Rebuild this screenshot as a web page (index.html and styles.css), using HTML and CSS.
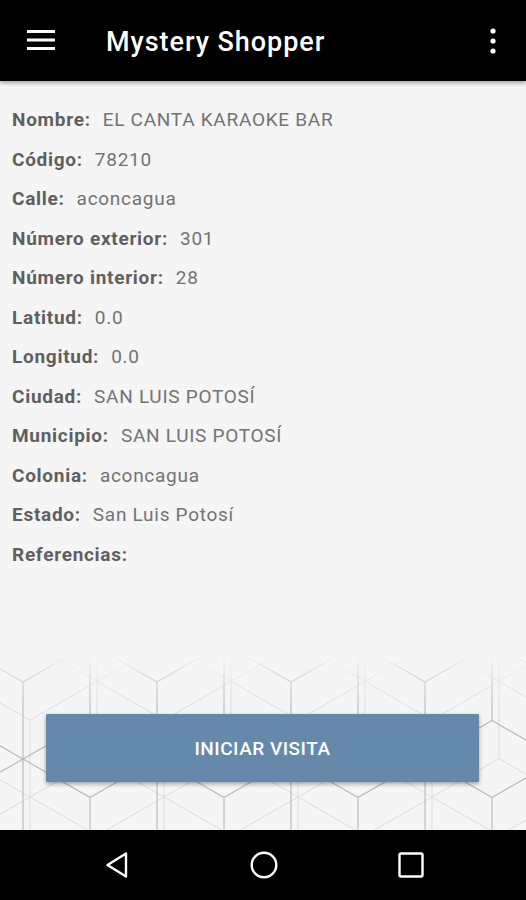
FILE: index.html
```html
<!DOCTYPE html>
<html lang="es">
<head>
<meta charset="utf-8">
<title>Mystery Shopper</title>
<link rel="stylesheet" href="styles.css">
</head>
<body>
<div class="screen">
  <header class="appbar">
    <svg class="menu-icon" width="28" height="22" viewBox="0 0 28 22">
      <rect x="0" y="1" width="28" height="3" fill="#fff"/>
      <rect x="0" y="9.5" width="28" height="3" fill="#fff"/>
      <rect x="0" y="18" width="28" height="3" fill="#fff"/>
    </svg>
    <h1 class="title">Mystery Shopper</h1>
    <svg class="more-icon" width="6" height="26" viewBox="0 0 6 26">
      <circle cx="3" cy="3" r="2.6" fill="#fff"/>
      <circle cx="3" cy="13" r="2.6" fill="#fff"/>
      <circle cx="3" cy="23" r="2.6" fill="#fff"/>
    </svg>
  </header>
  <main class="content">
    <ul class="info">
      <li class="row"><span class="label">Nombre:</span><span class="value">EL CANTA KARAOKE BAR</span></li>
      <li class="row"><span class="label">Código:</span><span class="value">78210</span></li>
      <li class="row"><span class="label">Calle:</span><span class="value">aconcagua</span></li>
      <li class="row"><span class="label">Número exterior:</span><span class="value">301</span></li>
      <li class="row"><span class="label">Número interior:</span><span class="value">28</span></li>
      <li class="row"><span class="label">Latitud:</span><span class="value">0.0</span></li>
      <li class="row"><span class="label">Longitud:</span><span class="value">0.0</span></li>
      <li class="row"><span class="label">Ciudad:</span><span class="value">SAN LUIS POTOSÍ</span></li>
      <li class="row"><span class="label">Municipio:</span><span class="value">SAN LUIS POTOSÍ</span></li>
      <li class="row"><span class="label">Colonia:</span><span class="value">aconcagua</span></li>
      <li class="row"><span class="label">Estado:</span><span class="value">San Luis Potosí</span></li>
      <li class="row"><span class="label">Referencias:</span><span class="value"></span></li>
    </ul>
    <div class="footer">
      <button class="start-btn" type="button">INICIAR VISITA</button>
    </div>
  </main>
  <nav class="navbar">
    <svg width="26" height="28" viewBox="0 0 26 28">
      <path d="M22 2.5 L3.5 14 L22 25.5 Z" fill="none" stroke="#fff" stroke-width="2.4" stroke-linejoin="round"/>
    </svg>
    <svg width="28" height="28" viewBox="0 0 28 28">
      <circle cx="14" cy="14" r="12.3" fill="none" stroke="#fff" stroke-width="2.4"/>
    </svg>
    <svg width="26" height="26" viewBox="0 0 26 26">
      <rect x="1.5" y="1.5" width="23" height="23" rx="1.5" fill="none" stroke="#fff" stroke-width="2.4"/>
    </svg>
  </nav>
</div>
</body>
</html>
```
FILE: styles.css
```css
* { box-sizing: border-box; }
html, body { margin: 0; padding: 0; }
body {
  width: 526px;
  height: 900px;
  overflow: hidden;
  font-family: Roboto, "Noto Sans", "Liberation Sans", sans-serif;
  background: #f5f5f5;
}
.screen {
  display: flex;
  flex-direction: column;
  height: 900px;
}
.appbar {
  height: 81px;
  flex: none;
  background: #000;
  display: flex;
  align-items: center;
  padding: 0 30px 0 27px;
  position: relative;
  z-index: 2;
  box-shadow: 0 2px 4px rgba(0,0,0,0.35);
}
.menu-icon { flex: none; margin-top: -1px; }
.title {
  margin: 0 0 0 51px;
  flex: 1;
  color: #fff;
  font-size: 27px;
  font-weight: 500;
  letter-spacing: 0.95px;
  margin-top: 2px;
}
.more-icon { flex: none; margin-top: 1px; }
.content {
  flex: 1;
  display: flex;
  flex-direction: column;
  justify-content: space-between;
}
.info {
  list-style: none;
  margin: 0;
  padding: 19px 12px 0;
}
.row {
  height: 39.5px;
  line-height: 39.5px;
  font-size: 19px;
  letter-spacing: 0.72px;
  white-space: nowrap;
}
.label {
  font-weight: 700;
  color: #5f5f5f;
}
.value {
  margin-left: 12px;
  color: #737373;
}
.footer {
  height: 175px;
  padding: 59px 47px 48px 46px;
  background-color: #f5f5f5;
  background-image:
    linear-gradient(to bottom, #f5f5f5 0%, rgba(245,245,245,0.5) 12%, rgba(245,245,245,0) 30%),
    url("data:image/svg+xml,%3Csvg xmlns='http://www.w3.org/2000/svg' width='134' height='231' viewBox='0 0 134 231'%3E%3Cg fill='none' stroke='%23b8b8b8' stroke-width='1.1'%3E%3Cpath d='M67 0L134 38.5L134 115.5L67 154L0 115.5L0 38.5Z'/%3E%3Cpath d='M67 77L67 231M67 77L0 38.5M67 77L134 38.5M0 0L0 38.5M134 0L134 38.5M0 192.5L0 231M134 192.5L134 231M0 192.5L67 154M134 192.5L67 154'/%3E%3C/g%3E%3C/svg%3E"),
    url("data:image/svg+xml,%3Csvg xmlns='http://www.w3.org/2000/svg' width='134' height='231' viewBox='0 0 134 231'%3E%3Cg fill='none' stroke='%23dcdcdc' stroke-width='1'%3E%3Cpath d='M67 0L134 38.5L134 115.5L67 154L0 115.5L0 38.5Z'/%3E%3Cpath d='M67 77L67 231M67 77L0 38.5M67 77L134 38.5M0 0L0 38.5M134 0L134 38.5M0 192.5L0 231M134 192.5L134 231M0 192.5L67 154M134 192.5L67 154'/%3E%3C/g%3E%3C/svg%3E");
  background-position: 0 0, -44px -50px, -37px -12px;
  background-repeat: no-repeat, repeat, repeat;
}
.start-btn {
  display: block;
  width: 100%;
  height: 68px;
  border: none;
  border-radius: 1px;
  background: #6589ab;
  color: #fff;
  font-family: Roboto, "Noto Sans", "Liberation Sans", sans-serif;
  font-size: 19px;
  font-weight: 500;
  letter-spacing: 0.5px;
  box-shadow: 0 2px 4px rgba(0,0,0,0.35);
}
.navbar {
  height: 70px;
  flex: none;
  background: #000;
  display: flex;
  align-items: center;
  justify-content: center;
  gap: 120px;
  padding-left: 2px;
}
```
